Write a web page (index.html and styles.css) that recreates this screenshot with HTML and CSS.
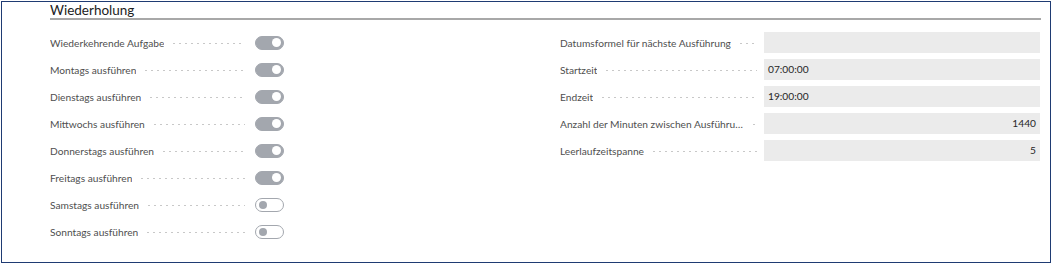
FILE: index.html
```html
<!DOCTYPE html>
<html lang="de">
  <head>
    <meta charset="UTF-8" />
    <title>Wiederholung</title>
    <link rel="stylesheet" href="styles.css">
  </head>
  <body>
    <div class="frame">
      <div class="section">
        <h2 class="section-title">Wiederholung</h2>

        <div class="columns">
          <div class="column">
            <div class="row">
              <span class="label">Wiederkehrende Aufgabe</span><span class="leader"></span>
              <span class="toggle on"></span>
            </div>
            <div class="row">
              <span class="label">Montags ausführen</span><span class="leader"></span>
              <span class="toggle on"></span>
            </div>
            <div class="row">
              <span class="label">Dienstags ausführen</span><span class="leader"></span>
              <span class="toggle on"></span>
            </div>
            <div class="row">
              <span class="label">Mittwochs ausführen</span><span class="leader"></span>
              <span class="toggle on"></span>
            </div>
            <div class="row">
              <span class="label">Donnerstags ausführen</span><span class="leader"></span>
              <span class="toggle on"></span>
            </div>
            <div class="row">
              <span class="label">Freitags ausführen</span><span class="leader"></span>
              <span class="toggle on"></span>
            </div>
            <div class="row">
              <span class="label">Samstags ausführen</span><span class="leader"></span>
              <span class="toggle"></span>
            </div>
            <div class="row">
              <span class="label">Sonntags ausführen</span><span class="leader"></span>
              <span class="toggle"></span>
            </div>
          </div>

          <div class="column right">
            <div class="row">
              <span class="label">Datumsformel für nächste Ausführung</span><span class="leader"></span>
              <span class="field"></span>
            </div>
            <div class="row">
              <span class="label">Startzeit</span><span class="leader"></span>
              <span class="field">07:00:00</span>
            </div>
            <div class="row">
              <span class="label">Endzeit</span><span class="leader"></span>
              <span class="field">19:00:00</span>
            </div>
            <div class="row">
              <span class="label">Anzahl der Minuten zwischen Ausführungen</span><span class="leader"></span>
              <span class="field number">1440</span>
            </div>
            <div class="row">
              <span class="label">Leerlaufzeitspanne</span><span class="leader"></span>
              <span class="field number">5</span>
            </div>
          </div>
        </div>
      </div>
    </div>
  </body>
</html>
```

FILE: styles.css
```css
* {
  margin: 0;
  padding: 0;
  box-sizing: border-box;
}

body {
  font-family: Lato, "Open Sans", sans-serif;
  background: #fff;
  padding: 1px 0 0 1px;
}

.frame {
  width: 1050px;
  height: 262px;
  border: 1px solid #1f3b73;
  box-shadow: 0 1px 0 #c8cad0;
}

.section {
  padding: 0 9px 0 48px;
}

.section-title {
  font-size: 13.5px;
  font-weight: 400;
  line-height: 16px;
  color: #212121;
  border-bottom: 2px solid #a8a8a8;
}

.columns {
  display: grid;
  grid-template-columns: 510px 480px;
  padding-top: 9px;
}

.row {
  display: flex;
  align-items: center;
  height: 27px;
}

.label {
  font-size: 10.2px;
  color: #4f4f4f;
  white-space: nowrap;
  overflow: hidden;
  text-overflow: ellipsis;
  max-width: 190px;
}

.leader {
  flex: 1;
  min-width: 6px;
  height: 1px;
  margin: 2px 10px 0 7px;
  background-image: radial-gradient(circle, #c8c8c8 0.6px, transparent 0.8px);
  background-size: 6px 1px;
  background-repeat: repeat-x;
}

.column .row {
  width: 234px;
}

.toggle {
  position: relative;
  flex-shrink: 0;
  width: 29px;
  height: 14px;
  border-radius: 7px;
  border: 1px solid #a3a7ae;
  background: #fff;
}

.toggle::after {
  content: "";
  position: absolute;
  top: 2px;
  left: 3px;
  width: 8px;
  height: 8px;
  border-radius: 50%;
  background: #a3a7ae;
}

.toggle.on {
  background: #a3a7ae;
}

.toggle.on::after {
  left: auto;
  right: 2px;
  width: 9px;
  height: 9px;
  top: 1.5px;
  background: #fff;
}

.right .row {
  width: 480px;
}

.right .label {
  max-width: 192px;
}

.right .leader {
  margin-right: 7px;
}

.field {
  flex-shrink: 0;
  width: 276px;
  height: 21px;
  line-height: 21px;
  background: #ebebeb;
  font-size: 10.2px;
  color: #262626;
  padding: 0 4px;
}

.field.number {
  text-align: right;
}
```
